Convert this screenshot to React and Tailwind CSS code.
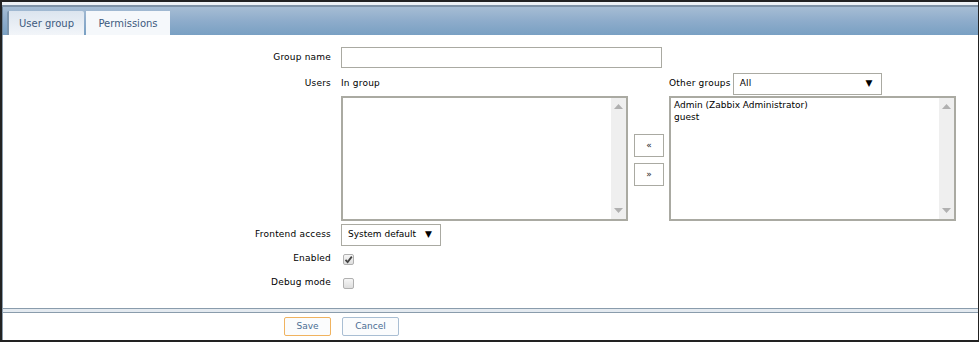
import React from 'react';

const font = "font-['DejaVu_Sans',_'Liberation_Sans',_sans-serif]";

const ScrollStrip = () => (
  <div className="w-[15px] h-full bg-[#efefef] flex flex-col items-center justify-between py-[6px]">
    <svg width="9" height="5" viewBox="0 0 9 5"><path d="M4.5 0L9 5H0z" fill="#b0b0b0" /></svg>
    <svg width="9" height="5" viewBox="0 0 9 5"><path d="M0 0h9L4.5 5z" fill="#b0b0b0" /></svg>
  </div>
);

const ListBox = ({ items = [] }) => (
  <div className="w-[287px] h-[125px] border-2 border-[#aaaaa2] bg-white flex">
    <div className="flex-1 px-[3px] pt-[1px] text-[9px] leading-[12px] text-black">
      {items.map((it) => (
        <div key={it}>{it}</div>
      ))}
    </div>
    <ScrollStrip />
  </div>
);

const Select = ({ value, width }) => (
  <div className={`${width} h-[22px] border border-[#aaaaa2] bg-white flex items-center justify-between pl-[6px] pr-[8px] text-[9px] text-black`}>
    <span>{value}</span>
    <span className="text-[9px]">▼</span>
  </div>
);

const CheckBox = ({ checked }) => (
  <div className="w-[11px] h-[11px] rounded-[2px] border border-[#b0b0b0] bg-gradient-to-b from-[#f6f6f6] to-[#dedede] flex items-center justify-center">
    {checked && (
      <svg width="9" height="9" viewBox="0 0 9 9">
        <path d="M1.5 4.8L3.6 7 7.8 1.6" stroke="#444" strokeWidth="1.8" fill="none" />
      </svg>
    )}
  </div>
);

const Row = ({ label, children, className = '', labelClass = '' }) => (
  <div className={`flex ${className}`}>
    <div className={`w-[328px] text-right text-[9px] tracking-[0.2px] text-black shrink-0 ${labelClass}`}>{label}</div>
    <div className="ml-[10px]">{children}</div>
  </div>
);

export default function App() {
  return (
    <div className={`w-[979px] h-[342px] bg-white border-t-2 border-r border-b-2 border-l-2 border-[#222] ${font} flex flex-col overflow-hidden`}>
      <div className="h-[3px] bg-[#eef2f6]" />
      <div className="h-[2px] bg-[#7f93a7]" />
      <div className="h-[28px] bg-gradient-to-b from-[#a6bdd4] via-[#8eaccb] to-[#79a0c3] flex items-end pl-[4px] gap-[2px] border-l border-[#6e859b]">
        <div className="w-[77px] h-[24px] rounded-t-[2px] border-l-2 border-[#7c95ad] bg-gradient-to-b from-[#dce5ef] to-[#f2f5f9] flex items-center justify-center text-[10px] text-[#3d5a7e]">User group</div>
        <div className="w-[84px] h-[24px] bg-[#f5f8fb] flex items-center justify-center text-[10px] text-[#3d5a7e]">Permissions</div>
      </div>
      <div className="flex-1 border-l border-[#8a9cac] flex flex-col">
        <div className="pt-[12px]">
          <Row label="Group name" className="items-center">
            <div className="w-[321px] h-[21px] border border-[#aaaaa2] bg-white" />
          </Row>
          <Row label="Users" className="mt-[5px] items-start" labelClass="h-[22px] flex items-center justify-end">
            <div className="flex">
              <div className="flex flex-col">
                <div className="h-[22px] flex items-center text-[9px] tracking-[0.2px] text-black">In group</div>
                <div className="mt-[1px]"><ListBox /></div>
              </div>
              <div className="w-[41px] flex flex-col items-start pl-[6px] pt-[61px] gap-[6px]">
                <div className="w-[30px] h-[23px] border border-[#aaaaa2] bg-white flex items-center justify-center text-[9px] text-[#222]">«</div>
                <div className="w-[30px] h-[23px] border border-[#aaaaa2] bg-white flex items-center justify-center text-[9px] text-[#222]">»</div>
              </div>
              <div className="flex flex-col">
                <div className="flex items-center gap-[2px] text-[9px] tracking-[0.2px] text-black">
                  <span>Other groups</span>
                  <Select value="All" width="w-[149px]" />
                </div>
                <div className="mt-[1px]"><ListBox items={['Admin (Zabbix Administrator)', 'guest']} /></div>
              </div>
            </div>
          </Row>
          <Row label="Frontend access" className="mt-[3px] items-center">
            <Select value="System default" width="w-[100px]" />
          </Row>
          <Row label="Enabled" className="mt-[6px] items-center h-[14px]">
            <div className="pl-[2px]"><CheckBox checked /></div>
          </Row>
          <Row label="Debug mode" className="mt-[10px] items-center h-[14px]">
            <div className="pl-[2px]"><CheckBox /></div>
          </Row>
        </div>
        <div className="mt-auto h-[5px] border-t border-b border-[#8a9cac] bg-[#e4eaf0]" />
        <div className="h-[27px] flex items-center pl-[281px] gap-[11px]">
          <div className="w-[47px] h-[19px] rounded-[2px] border border-[#f0b360] bg-[#fbfcfd] flex items-center justify-center text-[9px] text-[#4a6d93]">Save</div>
          <div className="w-[57px] h-[19px] rounded-[2px] border border-[#a9bed3] bg-[#fbfcfd] flex items-center justify-center text-[9px] text-[#4a6d93]">Cancel</div>
        </div>
      </div>
    </div>
  );
}
